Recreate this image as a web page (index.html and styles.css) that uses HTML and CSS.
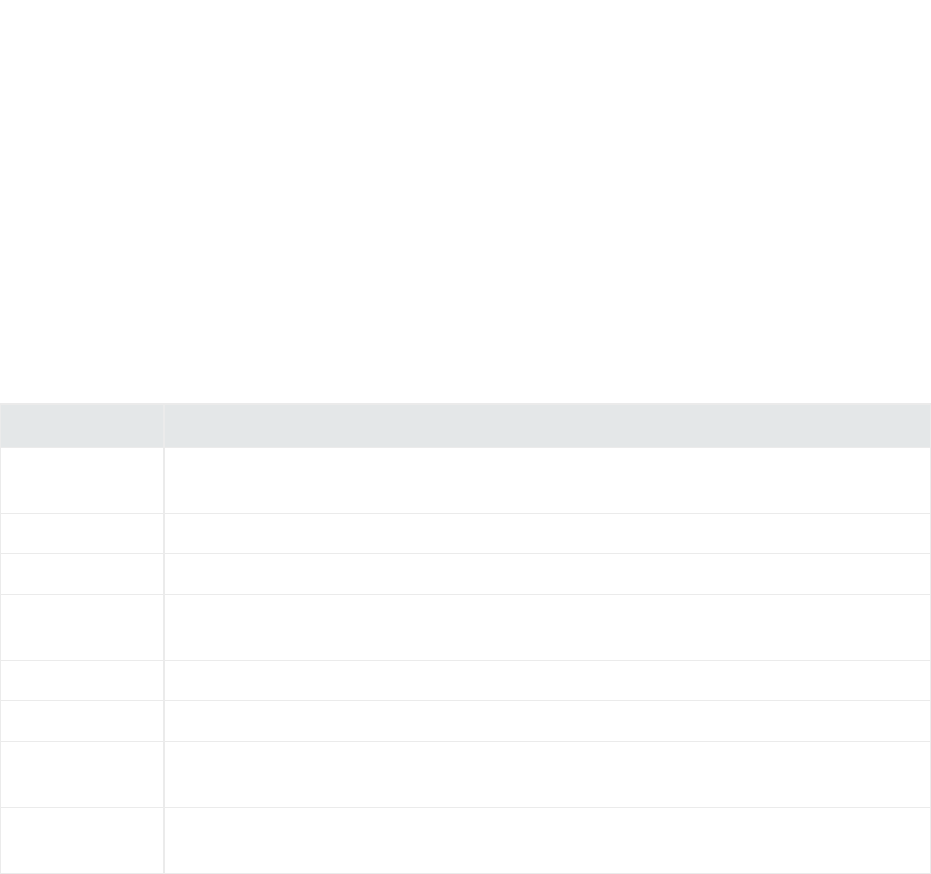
FILE: index.html
```html
<!DOCTYPE html>
<html lang="en">
<head>
<meta charset="utf-8">
<title>Table</title>
<link rel="stylesheet" href="styles.css">
</head>
<body>
<div class="page">
  <div class="intro"></div>
  <table class="data">
    <thead>
      <tr class="head"><th class="c1"></th><th class="c2"></th></tr>
    </thead>
    <tbody>
      <tr class="tall"><td></td><td></td></tr>
      <tr class="short"><td></td><td></td></tr>
      <tr class="short"><td></td><td></td></tr>
      <tr class="tall"><td></td><td></td></tr>
      <tr class="short"><td></td><td></td></tr>
      <tr class="short"><td></td><td></td></tr>
      <tr class="tall"><td></td><td></td></tr>
      <tr class="tall"><td></td><td></td></tr>
    </tbody>
  </table>
</div>
</body>
</html>
```
FILE: styles.css
```css
html, body {
  margin: 0;
  padding: 0;
  background: #ffffff;
  font-family: "Open Sans", "Liberation Sans", sans-serif;
  font-size: 14px;
  color: #333;
}
.page {
  width: 931px;
}
.intro {
  height: 403px;
}
.data {
  width: 931px;
  border-collapse: collapse;
  table-layout: fixed;
}
.data th, .data td {
  border: 1px solid #ebebeb;
  padding: 0;
}
.data th {
  background: #e4e7e8;
  border-top-width: 2px;
}
.data .c1 {
  width: 162px;
}
.data tr > :first-child {
  border-right-width: 2px;
}
.head {
  height: 43px;
}
.tall {
  height: 66px;
}
.short {
  height: 40.5px;
}
```
